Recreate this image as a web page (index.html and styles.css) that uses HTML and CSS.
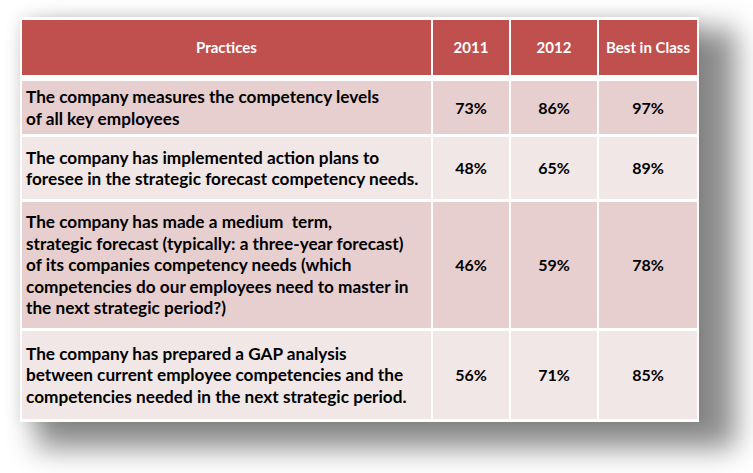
FILE: index.html
```html
<!DOCTYPE html>
<html>
<head>
<meta charset="utf-8">
<link rel="stylesheet" href="styles.css">
</head>
<body>
<div class="stage">
  <div class="card">
    <table class="grid">
      <colgroup>
        <col class="c-practice">
        <col class="c-year">
        <col class="c-year2">
        <col class="c-best">
      </colgroup>
      <thead>
        <tr class="head">
          <th>Practices</th>
          <th>2011</th>
          <th>2012</th>
          <th>Best in Class</th>
        </tr>
      </thead>
      <tbody>
        <tr class="r1 dark">
          <td class="txt">The company measures the competency levels<br>of all key employees</td>
          <td>73%</td><td>86%</td><td>97%</td>
        </tr>
        <tr class="r2 light">
          <td class="txt">The company has implemented action plans to<br>foresee in the strategic forecast competency needs.</td>
          <td>48%</td><td>65%</td><td>89%</td>
        </tr>
        <tr class="r3 dark">
          <td class="txt">The company has made a medium&nbsp; term,<br>strategic forecast (typically: a three-year forecast)<br>of its companies competency needs (which<br>competencies do our employees need to master in<br>the next strategic period?)</td>
          <td>46%</td><td>59%</td><td>78%</td>
        </tr>
        <tr class="r4 light">
          <td class="txt">The company has prepared a GAP analysis<br>between current employee competencies and the<br>competencies needed in the next strategic period.</td>
          <td>56%</td><td>71%</td><td>85%</td>
        </tr>
      </tbody>
    </table>
  </div>
</div>
</body>
</html>
```

FILE: styles.css
```css
html, body {
  margin: 0;
  padding: 0;
  background: #ffffff;
}

.stage {
  box-sizing: border-box;
  width: 753px;
  height: 473px;
  overflow: hidden;
  padding: 17px 0 0 20px;
}

.card {
  position: relative;
  display: inline-block;
}

.card::before {
  content: "";
  position: absolute;
  left: 16px;
  top: 12px;
  width: 100%;
  height: 100%;
  background: rgba(0, 0, 0, 0.46);
  filter: blur(14px);
  transform-origin: 0 0;
  transform: scale(1.03, 1.035);
  z-index: 0;
}

.card::after {
  content: "";
  position: absolute;
  inset: 0;
  box-shadow: 0 0 14px rgba(0, 0, 0, 0.1);
  z-index: 0;
}

.grid {
  position: relative;
  z-index: 1;
  border-collapse: separate;
  border-spacing: 2px 3px;
  background: #ffffff;
  font-family: Lato, "Open Sans", sans-serif;
  font-weight: 700;
  font-size: 16px;
  line-height: 21.5px;
  color: #000;
  table-layout: fixed;
  width: 679px;
}

.c-practice { width: 409px; }
.c-year { width: 76px; }
.c-year2 { width: 86px; }
.c-best { width: 98px; }

.grid th,
.grid td {
  padding: 0;
  text-align: center;
  vertical-align: middle;
}

.head th {
  background: #c0504d;
  color: #ffffff;
  height: 55px;
  font-size: 15px;
  border-bottom: 3px solid #ffffff;
}

.grid td.txt {
  text-align: left;
  padding-left: 4px;
  font-size: 17.2px;
}

.dark td { background: #e7cfcf; }
.light td { background: #f2e7e7; }

.r1 td { height: 53px; }
.r2 td { height: 62px; }
.r3 td { height: 126px; }
.r4 td { height: 88px; }
```
